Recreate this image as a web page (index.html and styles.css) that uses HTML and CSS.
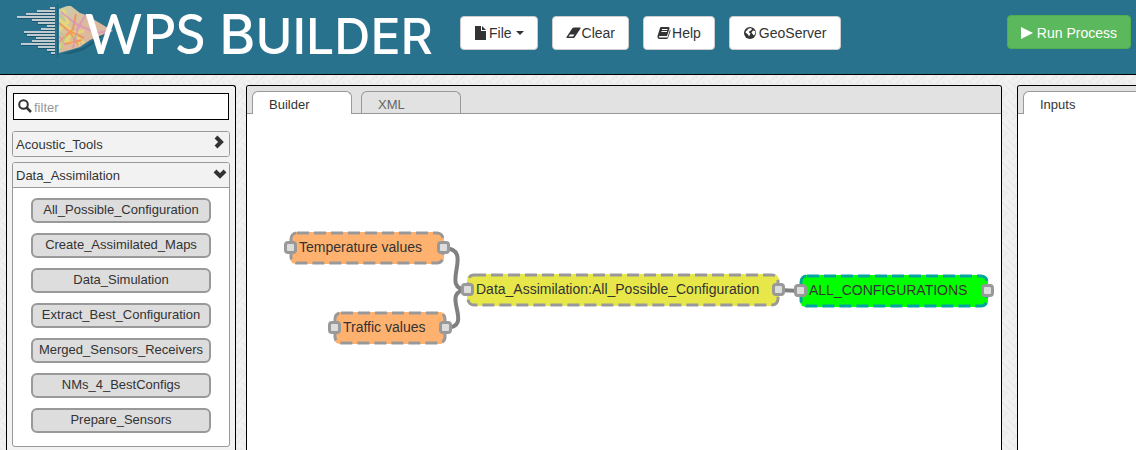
FILE: index.html
```html
<!DOCTYPE html>
<html lang="en">
<head>
<meta charset="utf-8">
<meta name="viewport" content="width=device-width, initial-scale=1">
<title>WPS Builder</title>
<link rel="stylesheet" href="styles.css">
</head>
<body>
<header class="topbar">
  <div class="brand">
    <svg class="brand-logo" width="120" height="60" viewBox="0 0 120 60" aria-hidden="true">
      <defs>
        <linearGradient id="land" x1="0" y1="0" x2="1" y2="1">
          <stop offset="0" stop-color="#c9cfad"/><stop offset=".45" stop-color="#dfb99a"/><stop offset="1" stop-color="#d2b9aa"/>
        </linearGradient>
        <clipPath id="coast"><path d="M59 9L67 6H71L80 13L86 15L98 22L113 31L104 34L90 40L80 47L70 50L59 53Z"/></clipPath>
      </defs>
      <path stroke="#1b566d" stroke-width="2" d="M50 9h5M37 12h18M26 15h29M17 18h38M32 21h23M38 24h17M47 27h8M41 30h14M24 33h31M27 36h28M36 39h19M32 42h23M21 45h34M38 48h17M47 51h8M51 54h4"/>
      <path stroke="#bfcbd1" stroke-width="2" d="M50 8h5M37 11h18M26 14h29M17 17h38M32 20h23M38 23h17M47 26h8M41 29h14M24 32h31M27 35h28M36 38h19M32 41h23M21 44h34M38 47h17M47 50h8M51 53h4"/>
      <path stroke="#1f6079" d="M57.500 4v54"/>
      <path fill="#1f6079" d="M62 54L84 47L98 37L104 34L96 42L84 50L70 54Z"/>
      <g clip-path="url(#coast)">
        <path fill="url(#land)" d="M59 5h56v50H59z"/>
        <g fill="none" stroke-opacity=".75">
          <path stroke="#e8df6b" stroke-width="3" d="M59 19L72 32L84 43M59 48L73 33L84 31M63 9L68 22L59 30M59 40L80 44"/>
          <path stroke="#f58a52" stroke-width="2" d="M59 23L69 31L78 45M59 42L73 29L76 14M69 31L84 38M65 44L82 40"/>
          <path stroke="#dc8fc0" stroke-width="2" d="M61 12L76 24L96 33L110 31M86 14L78 28L73 48M59 36L65 45"/>
          <path stroke="#b3cb84" stroke-width="2" d="M59 15L65 20M60 33L65 36L61 50M72 38L77 35"/>
        </g>
      </g>
    </svg>
    <h1 class="brand-name">WPS <span class="brand-initial">B</span><span class="brand-small">UILDER</span></h1>
  </div>
  <nav class="actions">
    <button class="btn" type="button"><svg width="14" height="14" viewBox="0 0 14 14" aria-hidden="true"><path fill="currentColor" d="M1 0h6v5h5v9H1zM8 0l4 4H8z"/></svg>File<span class="caret"></span></button>
    <button class="btn" type="button"><svg width="15" height="12" viewBox="0 0 15 12" aria-hidden="true"><path fill="currentColor" fill-rule="evenodd" d="M6.500 1Q7 .5 8 .5H14Q15 .5 14.500 1.500L8.500 10.500Q8 11 7 11H1Q0 11 .5 10zM2.500 9.500H7L8.500 7.500H4z"/></svg>Clear</button>
    <button class="btn" type="button"><svg width="14" height="14" viewBox="0 0 14 14" aria-hidden="true"><path fill="currentColor" d="M4 1H11.500Q13 1 12.500 2.500L10 10H2.500Q1.500 10.500 2 11.500H10.500L13 3.500Q14 4 13.500 5L11 12Q10.500 13 9.500 13H2Q0 12.500 .5 10L3 2Q3.400 1 4 1z"/><path stroke="#fff" d="M5 3.500h5.500M4.500 5.500h5.500"/></svg>Help</button>
    <button class="btn btn-geo" type="button"><svg width="14" height="14" viewBox="0 0 14 14" aria-hidden="true"><circle cx="7" cy="7" r="6" fill="currentColor"/><path fill="#fff" d="M7.500 2L9 3 8 4.500 6.500 5 6 6.500 7.500 7.500 6 10.500 5 8.500 2.500 6.500 3 5 4 4.500 5 3zM10 4.500L12 5l.3 2.500L11 9.500 9.500 8 8.500 6.500z"/></svg>GeoServer</button>
  </nav>
  <button class="btn btn-run" type="button"><svg width="12" height="12" viewBox="0 0 12 12" aria-hidden="true"><path fill="currentColor" d="M0 0L12 6L0 12z"/></svg>Run Process</button>
</header>

<main class="workspace">
  <aside class="panel library">
    <label class="filter">
      <svg class="filter-icon" width="14" height="14" viewBox="0 0 14 14" aria-hidden="true"><circle cx="5.500" cy="5.500" r="4.300" fill="none" stroke="currentColor" stroke-width="2"/><path stroke="currentColor" stroke-width="2.500" d="M8.500 8.500L13 13"/></svg>
      <input class="filter-input" type="text" placeholder="filter" aria-label="filter">
    </label>
    <section class="group">
      <button class="group-head" type="button" aria-expanded="false">Acoustic_Tools<svg class="chevron" width="12" height="14" viewBox="0 0 12 14" aria-hidden="true"><path fill="none" stroke="currentColor" stroke-width="4" d="M2 2L7 7L2 12"/></svg></button>
    </section>
    <section class="group">
      <button class="group-head" type="button" aria-expanded="true">Data_Assimilation<svg class="chevron" width="12" height="12" viewBox="0 0 12 12" aria-hidden="true"><path fill="none" stroke="currentColor" stroke-width="4" d="M1 4L6 9L11 4"/></svg></button>
      <div class="group-body">
        <button class="process" type="button">All_Possible_Configuration</button>
        <button class="process" type="button">Create_Assimilated_Maps</button>
        <button class="process" type="button">Data_Simulation</button>
        <button class="process" type="button">Extract_Best_Configuration</button>
        <button class="process" type="button">Merged_Sensors_Receivers</button>
        <button class="process" type="button">NMs_4_BestConfigs</button>
        <button class="process" type="button">Prepare_Sensors</button>
      </div>
    </section>
  </aside>

  <section class="panel editor">
    <div class="tabs" role="tablist">
      <button class="tab tab-active" type="button" role="tab" aria-selected="true">Builder</button>
      <button class="tab" type="button" role="tab" aria-selected="false">XML</button>
    </div>
    <div class="canvas">
      <svg class="wires" width="755" height="336" viewBox="0 0 755 336" aria-hidden="true">
        <path d="M196 134C230 134 190 176 221 176"/>
        <path d="M198 214C230 214 190 176 221 176"/>
        <path d="M531 176L554 177"/>
      </svg>
      <div class="node node-input node-temperature"><svg class="outline" aria-hidden="true"><rect x="1" y="1" rx="6"/></svg>Temperature values<i class="port port-in"></i><i class="port port-out"></i></div>
      <div class="node node-input node-traffic"><svg class="outline" aria-hidden="true"><rect x="1" y="1" rx="6"/></svg>Traffic values<i class="port port-in"></i><i class="port port-out"></i></div>
      <div class="node node-process"><svg class="outline" aria-hidden="true"><rect x="1" y="1" rx="6"/></svg>Data_Assimilation:All_Possible_Configuration<i class="port port-in"></i><i class="port port-out"></i></div>
      <div class="node node-output"><svg class="outline" aria-hidden="true"><rect x="1" y="1" rx="6"/></svg>ALL_CONFIGURATIONS<i class="port port-in"></i><i class="port port-out"></i></div>
    </div>
  </section>

  <section class="panel inputs">
    <div class="tabs" role="tablist">
      <button class="tab tab-active tab-wide" type="button" role="tab" aria-selected="true">Inputs</button>
    </div>
  </section>
</main>
</body>
</html>
```

FILE: styles.css
```css
* { box-sizing: border-box; }

body {
  margin: 0;
  height: 100vh;
  overflow: hidden;
  display: flex;
  flex-direction: column;
  font: 13px/18px "Liberation Sans", Arial, sans-serif;
  color: #333;
  background-color: #f1f1f1;
  background-image: url("data:image/svg+xml,%3Csvg xmlns='http://www.w3.org/2000/svg' width='20' height='20'%3E%3Cpath d='M-2 6L6 14M2 2L18 18M8 0L20 12M0 20L8 12M14 6L20 0M0 12L3 15M12 20L20 12' fill='none' stroke='%23eaeaea' stroke-width='2'/%3E%3C/svg%3E");
}

button, input { font: inherit; color: inherit; }
button { cursor: pointer; }

.topbar {
  flex: none;
  display: flex;
  align-items: flex-start;
  height: 75px;
  padding-right: 5px;
  background: #28728e;
  border-bottom: 1px solid #000;
}

.brand { display: flex; flex: none; width: 460px; }
.brand-logo { flex: none; margin-right: -35px; }
.brand-name {
  z-index: 1;
  margin: 0;
  font: 500 55px/66px Lato, sans-serif;
  color: #fff;
  white-space: nowrap;
}
.brand-initial { font-family: Inter, sans-serif; }
.brand-small { font-family: Inter, sans-serif; font-size: 50px; }

.actions { display: flex; gap: 14px; padding-top: 16px; }
.btn {
  display: flex;
  align-items: center;
  justify-content: center;
  gap: 1px;
  height: 34px;
  padding: 0 13px;
  font-size: 14px;
  background: #fff;
  border: 1px solid #ccc;
  border-radius: 4px;
  white-space: nowrap;
}
.btn-geo { gap: 2px; }
.caret {
  margin-left: 3px;
  border: 4px solid transparent;
  border-top-color: currentColor;
  border-bottom: 0;
}
.btn-run {
  margin: 15px 0 0 auto;
  padding-top: 2px;
  gap: 4px;
  color: #fff;
  background: #5cb85c;
  border-color: #4cae4c;
}

.workspace {
  flex: 1;
  min-height: 0;
  display: flex;
  padding: 10px 0 0 6px;
}
.panel {
  border: 1px solid #000;
  border-bottom: 0;
  border-radius: 3px 3px 0 0;
  background: #fff;
}

.library {
  flex: none;
  width: 230px;
  margin-right: 10px;
  padding: 7px 5px;
  background: #f2f2f2;
  overflow: hidden;
}
.filter {
  display: flex;
  align-items: center;
  height: 27px;
  margin: 0 1px 11px;
  padding-left: 4px;
  background: #fff;
  border: 1px solid #000;
}
.filter-icon { margin-bottom: 2px; }
.filter-input {
  flex: 1;
  min-width: 0;
  padding: 2px 2px 0;
  border: 0;
  outline: 0;
  background: none;
}
.filter-input::placeholder { color: #999; }

.group {
  margin-bottom: 5px;
  border: 1px solid #999;
  border-radius: 3px;
  background: #fff;
}
.group-head {
  display: flex;
  align-items: center;
  justify-content: space-between;
  width: 100%;
  height: 24px;
  padding: 2px 3px 0;
  border: 0;
  border-radius: 2px;
  background: #f2f2f2;
}
.chevron { margin-bottom: 6px; overflow: visible; }
.group-body {
  display: flex;
  flex-direction: column;
  gap: 10px;
  padding: 10px 18px 13px;
  border-top: 1px solid #999;
}
.process {
  height: 25px;
  padding: 0 0 2px;
  background: #ddd;
  border: 2px solid #999;
  border-radius: 6px;
  white-space: nowrap;
}

.editor {
  flex: 1;
  min-width: 0;
  margin-right: 15px;
  display: flex;
  flex-direction: column;
  overflow: hidden;
}
.tabs {
  display: flex;
  gap: 9px;
  height: 28px;
  padding: 5px 5px 0;
  background: #e2e2e2;
  border-bottom: 1px solid #999;
}
.tab {
  flex: none;
  width: 100px;
  height: 22px;
  padding: 4px 16px 0;
  text-align: left;
  color: #666;
  background: #e2e2e2;
  border: 1px solid #999;
  border-bottom: 0;
  border-radius: 6px 6px 0 0;
}
.tab-active { height: 23px; color: #333; background: #fff; }
.tab-wide { width: 140px; }

.inputs {
  flex: none;
  width: 119px;
  border-right: 0;
  border-top-right-radius: 0;
  overflow: hidden;
}

.canvas { position: relative; flex: 1; }
.wires { position: absolute; left: 0; top: 0; fill: none; stroke: #808080; stroke-width: 4; }
.node {
  position: absolute;
  height: 32px;
  padding: 6px 9px;
  font-size: 14px;
  border-radius: 6px;
  white-space: nowrap;
}
.node-temperature { left: 43px; top: 118px; width: 154px; }
.node-traffic { left: 87px; top: 198px; width: 112px; }
.node-process { left: 220px; top: 160px; width: 312px; background: #e7e74a; }
.node-output { left: 553px; top: 161px; width: 188px; background: #0f0; }
.node-input { background: #ffb270; }
.outline { position: absolute; left: 0; top: 0; width: 100%; height: 100%; overflow: visible; }
.outline rect {
  width: calc(100% - 2px);
  height: calc(100% - 2px);
  fill: none;
  stroke: #999;
  stroke-width: 3;
  stroke-dasharray: 12 5;
}
.node-output .outline rect { stroke: #00a5a0; }
.port {
  position: absolute;
  top: 9px;
  width: 13px;
  height: 13px;
  background: #ddd;
  border: 3px solid #999;
  border-radius: 4px;
}
.port-in { left: -6px; }
.port-out { right: -6px; }
```
